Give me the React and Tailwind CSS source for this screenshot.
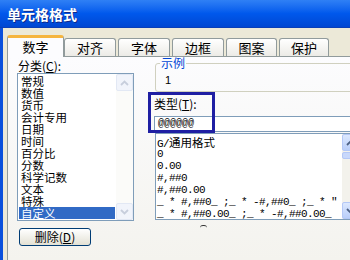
import React from 'react';

const cats = ['常规', '数值', '货币', '会计专用', '日期', '时间', '百分比', '分数', '科学记数', '文本', '特殊', '自定义'];
const formats = ['0', '0.00', '#,##0', '#,##0.00', '_ * #,##0_ ;_ * -#,##0_ ;_ * "', '_ * #,##0.00_ ;_ * -#,##0.00_'];
const tabs = [
  { label: '对齐', w: 'w-[52px]' },
  { label: '字体', w: 'w-[52px]' },
  { label: '边框', w: 'w-[52px]' },
  { label: '图案', w: 'w-[51px]' },
  { label: '保护', w: 'w-[50px]' },
];

// little chevron used on the scroll buttons
const Chevron = ({ up, color }) => (
  <svg width="9" height="6" viewBox="0 0 9 6">
    <path d={up ? 'M1 5 L4.5 1.5 L8 5' : 'M1 1 L4.5 4.5 L8 1'} fill="none" stroke={color} strokeWidth="1.8" />
  </svg>
);

const ScrollBar = ({ enabled }) => {
  const btn = enabled
    ? 'h-[17px] rounded-[2px] border border-[#B4C8F6] bg-linear-to-b from-[#DCE8FE] to-[#B9CEF9] flex items-center justify-center'
    : 'h-[17px] rounded-[2px] border border-[#E2E8F4] bg-[#F1F4FB] flex items-center justify-center';
  const color = enabled ? '#4D6185' : '#C7CEDC';
  return (
    <div className={`w-[17px] shrink-0 flex flex-col ${enabled ? 'bg-[#F3F2EC]' : 'bg-[#FBFBF9]'}`}>
      <div className={btn}><Chevron up color={color} /></div>
      {enabled ? (
        <div className="mt-[1px] h-[7px] rounded-[2px] border border-[#B4C8F6] bg-[#C8D8FB]"></div>
      ) : null}
      <div className="flex-1"></div>
      <div className={btn}><Chevron color={color} /></div>
    </div>
  );
};

export default function App() {
  return (
    <div className="w-[350px] h-[260px] overflow-hidden bg-[#ECE9D8] flex flex-col font-['Noto_Sans_CJK_SC',sans-serif] text-black">
      {/* Title bar */}
      <div className="h-[28px] shrink-0 bg-linear-to-b from-[#2F80F5] via-[#0058EC] to-[#0047D2] border-b border-[#0A3FB8] flex items-center pl-[7px] pt-[1px]">
        <span className="text-white font-bold text-[14px] leading-[16px] [text-shadow:1px_1px_0_#0F2A8A]">单元格格式</span>
      </div>

      <div className="flex-1 flex min-h-0">
        {/* window frame */}
        <div className="w-[3px] shrink-0 bg-[#0A50DC]"></div>

        <div className="flex-1 flex flex-col pl-[4px] min-w-0">
          {/* Tabs */}
          <div className="h-[28px] shrink-0 flex items-end">
            <div className="relative z-10 -mb-[1px] w-[57px] h-[22px] shrink-0 bg-[#FCFCFE] border-x border-[#919B9C] border-t-[3px] border-t-[#F5B53F] rounded-t-[3px] flex items-center justify-center pb-[2px] text-[13px] leading-[14px]">
              数字
            </div>
            <div className="flex items-end gap-[2px]">
              {tabs.map((t) => (
                <div
                  key={t.label}
                  className={`${t.w} h-[18px] shrink-0 border-t border-x border-[#919B9C] rounded-t-[3px] bg-linear-to-b from-white to-[#ECEBE6] flex items-center justify-center text-[13px] leading-[14px]`}
                >
                  {t.label}
                </div>
              ))}
            </div>
          </div>

          {/* Tab page */}
          <div className="flex-1 flex border-t border-l border-[#919B9C] bg-linear-to-b from-[#FCFCFE] to-[#F4F3EE]">
            {/* Category column */}
            <div className="w-[126px] shrink-0 pl-[9px] pt-[2px] flex flex-col">
              <div className="text-[12px] leading-[14px] pl-[1px]">
                分类(<span className="underline">C</span>):
              </div>
              <div className="w-[117px] h-[148px] border border-[#7F9DB9] bg-white flex">
                <div className="flex-1 pt-[1px] px-[1px] overflow-hidden">
                  {cats.map((c) => (
                    <div
                      key={c}
                      className={`h-[12px] leading-[12px] text-[11.5px] pl-[2px] whitespace-nowrap ${c === '自定义' ? 'bg-[#316AC5] text-white' : ''}`}
                    >
                      {c}
                    </div>
                  ))}
                </div>
                <ScrollBar />
              </div>
              <div className="mt-[7px] ml-[2px] w-[72px] h-[18px] rounded-[3px] border border-[#003C74] bg-linear-to-b from-white to-[#E3E1D4] flex items-center justify-center text-[12px] leading-[14px]">
                删除(<span className="underline">D</span>)
              </div>
            </div>

            {/* Format column */}
            <div className="relative ml-[14px] w-[212px] shrink-0 flex flex-col">
              <fieldset className="ml-[7px] border border-[#D0D0BF] rounded-[3px] px-0">
                <legend className="ml-[4px] px-[1px] text-[12px] leading-[12px] text-[#0046D5]">示例</legend>
                <div className="pl-[9px] pt-[5px] pb-[5px] text-[11px] leading-[12px] font-['Liberation_Sans',sans-serif]">1</div>
              </fieldset>

              <div className="mt-[5px] ml-[6px] text-[12px] leading-[14px]">
                类型(<span className="underline">T</span>):
              </div>
              <div className="mt-[5px] ml-[6px] h-[16px] border border-[#7F9DB9] bg-white flex items-center pl-[3px] font-['Liberation_Mono',monospace] text-[10px] leading-[12px]">
                @@@@@@
              </div>

              <div className="mt-[1px] ml-[7px] h-[87px] border border-[#7F9DB9] bg-white flex">
                <div className="flex-1 min-w-0 pt-[2px] pl-[1px] overflow-hidden">
                  <div className="h-[12px] leading-[12px] whitespace-nowrap font-['Liberation_Mono',monospace] text-[11px] tracking-[-0.6px]">
                    G/<span className="font-['Noto_Sans_CJK_SC',sans-serif] text-[11.5px] leading-[12px] tracking-normal">通用格式</span>
                  </div>
                  {formats.map((f) => (
                    <div key={f} className="h-[12px] leading-[12px] whitespace-pre font-['Liberation_Mono',monospace] text-[11px] tracking-[-0.6px]">
                      {f}
                    </div>
                  ))}
                </div>
                <ScrollBar enabled />
              </div>

              <div className="mt-[5px] ml-[52px] w-[7px] h-[3px] border-t-[1.5px] border-[#333333] rounded-t-full"></div>

              {/* annotation box around the type field */}
              <div className="absolute left-0 top-[35px] w-[67px] h-[41px] border-[3px] border-[#1F1FA3] pointer-events-none"></div>
            </div>
          </div>
        </div>
      </div>
    </div>
  );
}
